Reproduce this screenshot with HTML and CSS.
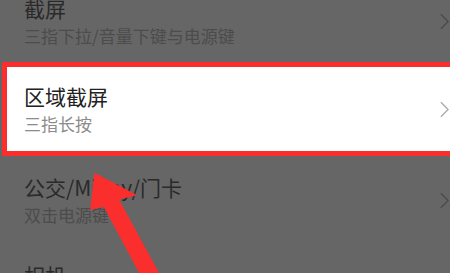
FILE: index.html
```html
<!DOCTYPE html>
<html lang="zh">
<head>
<meta charset="utf-8">
<link rel="stylesheet" href="styles.css">
</head>
<body>
<div class="screen">
  <div class="list">
    <div class="row dim first">
      <div class="text">
        <div class="title">截屏</div>
        <div class="sub">三指下拉/音量下键与电源键</div>
      </div>
      <svg class="chev" viewBox="0 0 10 18"><path d="M1 1 L9 9 L1 17"/></svg>
    </div>
    <div class="hl-frame">
      <div class="row hl">
        <div class="text">
          <div class="title">区域截屏</div>
          <div class="sub">三指长按</div>
        </div>
        <svg class="chev" viewBox="0 0 10 18"><path d="M1 1 L9 9 L1 17"/></svg>
      </div>
    </div>
    <div class="row dim">
      <div class="text">
        <div class="title">公交/MiPay/门卡</div>
        <div class="sub">双击电源键</div>
      </div>
      <svg class="chev" viewBox="0 0 10 18"><path d="M1 1 L9 9 L1 17"/></svg>
    </div>
    <div class="row dim">
      <div class="text">
        <div class="title">相机</div>
        <div class="sub">双击音量下键</div>
      </div>
      <svg class="chev" viewBox="0 0 10 18"><path d="M1 1 L9 9 L1 17"/></svg>
    </div>
  </div>
  <svg class="arrow" viewBox="0 0 450 273" width="450" height="273">
    <polygon points="95,174 135,195 118,199 162,280 146,284 104,206 91,209"/>
  </svg>
</div>
</body>
</html>
```
FILE: styles.css
```css
html, body {
  margin: 0;
  padding: 0;
}
body {
  font-family: "Noto Sans CJK SC", "Noto Sans", sans-serif;
  background: #666666;
}
.screen {
  position: relative;
  width: 450px;
  height: 273px;
  overflow: hidden;
  background: #666666;
}
.list {
  width: 450px;
  margin-top: -20px;
}
.row {
  box-sizing: border-box;
  height: 88px;
  display: flex;
  align-items: center;
  justify-content: space-between;
  padding-left: 24px;
  padding-right: 1px;
}
.row.first {
  height: 82px;
}
.text {
  display: flex;
  flex-direction: column;
}
.title {
  font-size: 21px;
  line-height: 27px;
  white-space: nowrap;
}
.sub {
  font-size: 17px;
  line-height: 24px;
  margin-top: 2px;
  white-space: nowrap;
}
.chev {
  width: 9px;
  height: 17px;
  flex: none;
}
.chev path {
  fill: none;
  stroke-width: 1.4;
}
.dim .title { color: #2a2a2a; }
.dim .sub { color: #4c4c4c; }
.dim .chev path { stroke: #4a4a4a; }

.hl-frame {
  box-sizing: border-box;
  height: 94px;
  margin-left: 2px;
  margin-right: -20px;
  padding: 5px 0 5px 5px;
  background: #fb2e2e;
}
.hl {
  height: 84px;
  padding-left: 17px;
  padding-right: 21px;
  background: #ffffff;
}
.hl .title { color: #222222; }
.hl .sub { color: #8c8c8c; }
.hl .chev path { stroke: #a8a8a8; }

.arrow {
  position: absolute;
  left: 0;
  top: 0;
}
.arrow polygon {
  fill: #fb2e2e;
  stroke: #fb2e2e;
  stroke-width: 1.5;
  stroke-linejoin: round;
}
```
